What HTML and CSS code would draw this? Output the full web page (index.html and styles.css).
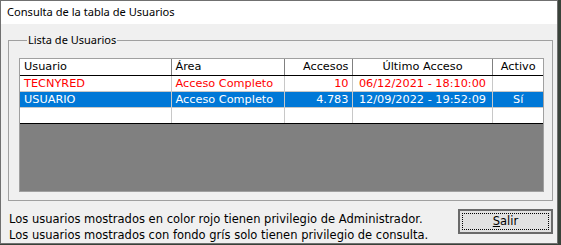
FILE: index.html
```html
<!DOCTYPE html>
<html lang="es">

<head>
    <meta charset="UTF-8">
    <meta name="viewport" content="width=device-width, initial-scale=1.0">
    <title>Consulta de la tabla de Usuarios</title>
    <link rel="stylesheet" href="styles.css">
</head>

<body>
    <div class="window">
        <div class="titlebar">Consulta de la tabla de Usuarios</div>
        <div class="client">
            <fieldset class="group">
                <legend>Lista de Usuarios</legend>
                <div class="grid">
                    <table class="users">
                        <colgroup>
                            <col class="c-user">
                            <col class="c-area">
                            <col class="c-count">
                            <col class="c-last">
                            <col class="c-active">
                        </colgroup>
                        <tr>
                            <th>Usuario</th>
                            <th>Área</th>
                            <th class="right">Accesos</th>
                            <th class="center">Último Acceso</th>
                            <th class="center">Activo</th>
                        </tr>
                        <tr class="admin">
                            <td>TECNYRED</td>
                            <td>Acceso Completo</td>
                            <td class="right">10</td>
                            <td class="center">06/12/2021 - 18:10:00</td>
                            <td class="center"></td>
                        </tr>
                        <tr class="selected">
                            <td>USUARIO</td>
                            <td>Acceso Completo</td>
                            <td class="right">4.783</td>
                            <td class="center">12/09/2022 - 19:52:09</td>
                            <td class="center">Sí</td>
                        </tr>
                        <tr class="last">
                            <td></td>
                            <td></td>
                            <td></td>
                            <td></td>
                            <td></td>
                        </tr>
                    </table>
                </div>
            </fieldset>
            <div class="footer">
                <p class="note">Los usuarios mostrados en color rojo tienen privilegio de Administrador.<br>Los usuarios mostrados con fondo grís solo tienen privilegio de consulta.</p>
                <button class="btn"><span class="focus"><u>S</u>alir</span></button>
            </div>
        </div>
    </div>
</body>

</html>
```

FILE: styles.css
```css
* {
    margin: 0;
    padding: 0;
    box-sizing: border-box;
}
body {
    background-color: #39423a;
    font-family: "DejaVu Sans", sans-serif;
    font-size: 11.3px;
}
.window {
    width: 558px;
    height: 244px;
    border: 1px solid #707070;
    background-color: #f0f0f0;
    display: flex;
    flex-direction: column;
}
.titlebar {
    height: 24px;
    line-height: 22px;
    padding-left: 6px;
    background-color: #fff;
    font-family: "Noto Sans", sans-serif;
    font-size: 11.1px;
    color: #000;
}
.client {
    flex: 1;
    padding: 9px 4px 0 7px;
}
.group {
    width: 545px;
    border: 1px solid #a0a0a0;
    padding: 11px 8px 8px 10px;
}
.group legend {
    margin-left: 8px;
    padding: 0 1px;
    line-height: 14px;
    font-family: "Noto Sans", sans-serif;
    font-size: 11px;
}
.grid {
    height: 134px;
    border: 1px solid #a0a0a0;
    background-color: #808080;
}
.users {
    width: 523px;
    border-collapse: collapse;
    table-layout: fixed;
    background-color: #fff;
}
.c-user { width: 151px; }
.c-area { width: 113px; }
.c-count { width: 68px; }
.c-last { width: 140px; }
.c-active { width: 51px; }
.users th,
.users td {
    height: 16px;
    padding: 0 3px 0 4px;
    font-weight: 400;
    text-align: left;
    white-space: nowrap;
    overflow: hidden;
    line-height: 15px;
}
.users th {
    border-right: 1px solid #808080;
    border-bottom: 1px solid #000;
}
.users td {
    border-right: 1px solid #c8c8c8;
    border-bottom: 1px solid #c8c8c8;
}
.users th:last-child,
.users td:last-child {
    border-right: none;
}
.users .right {
    text-align: right;
}
.users .center {
    text-align: center;
}
.admin td {
    color: #ff0000;
}
.selected td {
    background-color: #0078d7;
    color: #fff;
}
.last td {
    border-bottom: 1px solid #000;
}
.footer {
    display: flex;
    justify-content: space-between;
    align-items: flex-start;
    padding-top: 7px;
    width: 545px;
}
.note {
    padding-left: 1px;
    padding-top: 3px;
    line-height: 16px;
    font-size: 11.5px;
}
.btn {
    width: 95px;
    height: 25px;
    margin-top: 1px;
    background-color: #e1e1e1;
    border: 2px solid #6a6a6a;
    padding: 2px;
    font-family: "DejaVu Sans", sans-serif;
    font-size: 11.5px;
    color: #000;
}
.focus {
    display: block;
    height: 100%;
    line-height: 15px;
    border: 1px dotted #000;
}
```
